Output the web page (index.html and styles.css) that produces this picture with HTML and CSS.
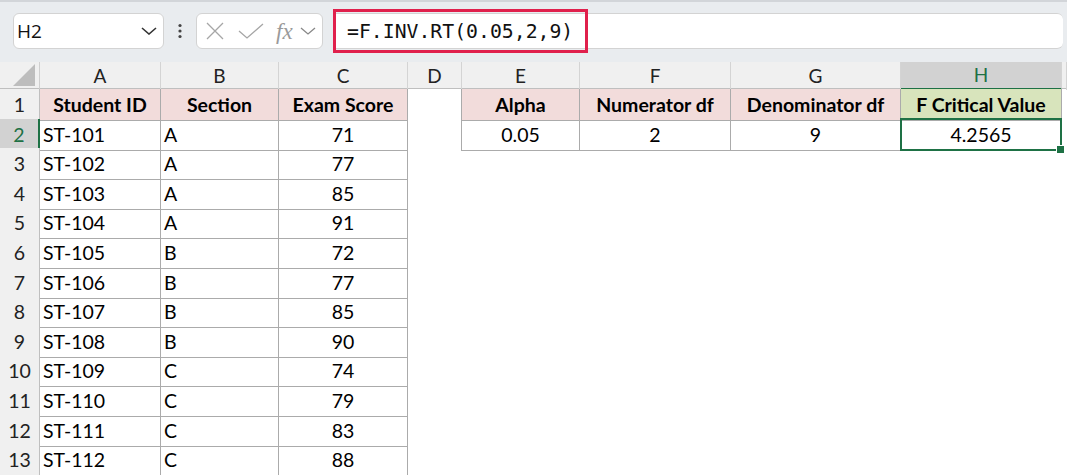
FILE: index.html
```html
<!DOCTYPE html>
<html lang="en">
<head>
    <meta charset="UTF-8">
    <meta name="viewport" content="width=device-width, initial-scale=1.0">
    <title>F.INV.RT - Sheet</title>
    <link rel="stylesheet" href="styles.css">
</head>
<body>
    <div class="toolbar">
        <div class="namebox">
            <span>H2</span>
            <svg class="chev" width="16" height="8" viewBox="0 0 16 8"><path d="M1 1 L8 7 L15 1" fill="none" stroke="#333" stroke-width="1.6"/></svg>
        </div>
        <svg class="dots" width="6" height="16" viewBox="0 0 6 16"><circle cx="3" cy="2.5" r="1.6" fill="#444"/><circle cx="3" cy="8" r="1.6" fill="#444"/><circle cx="3" cy="13.5" r="1.6" fill="#444"/></svg>
        <div class="fxbox">
            <svg width="20" height="18" viewBox="0 0 20 18"><path d="M2 1 L18 17 M18 1 L2 17" stroke="#a6a6a6" stroke-width="1.3" fill="none"/></svg>
            <svg width="26" height="16" viewBox="0 0 26 16"><path d="M1 8 L9 15 L25 1" stroke="#a6a6a6" stroke-width="1.3" fill="none"/></svg>
            <span class="fx">fx</span>
            <svg width="16" height="8" viewBox="0 0 16 8"><path d="M1 1 L8 7 L15 1" fill="none" stroke="#888" stroke-width="1.3"/></svg>
        </div>
        <div class="formula">
            <span class="ftext">=F.INV.RT(0.05,2,9)</span>
            <div class="mark"></div>
        </div>
    </div>

    <div class="sheet">
        <div class="row colhead">
            <div class="corner"><svg width="22" height="22" viewBox="0 0 22 22"><path d="M22 0 L22 22 L0 22 Z" fill="#bdbdbd"/></svg></div>
            <div class="ch">A</div><div class="ch">B</div><div class="ch">C</div><div class="ch">D</div>
            <div class="ch">E</div><div class="ch">F</div><div class="ch">G</div><div class="ch sel">H</div><div class="ch"></div>
        </div>
        <div class="row">
            <div class="rh">1</div>
            <div class="c hd">Student ID</div><div class="c hd">Section</div><div class="c hd">Exam Score</div>
            <div class="c edge"></div>
            <div class="c hd">Alpha</div><div class="c hd">Numerator df</div><div class="c hd">Denominator df</div><div class="c hd green">F Critical Value</div>
            <div class="c"></div>
        </div>
        <div class="row">
            <div class="rh active">2</div>
            <div class="c b">ST-101</div><div class="c b">A</div><div class="c b mid">71</div>
            <div class="c edge"></div>
            <div class="c b mid">0.05</div><div class="c b mid">2</div><div class="c b mid">9</div><div class="c b mid picked">4.2565</div>
            <div class="c"></div>
        </div>
        <div class="row"><div class="rh">3</div><div class="c b">ST-102</div><div class="c b">A</div><div class="c b mid">77</div></div>
        <div class="row"><div class="rh">4</div><div class="c b">ST-103</div><div class="c b">A</div><div class="c b mid">85</div></div>
        <div class="row"><div class="rh">5</div><div class="c b">ST-104</div><div class="c b">A</div><div class="c b mid">91</div></div>
        <div class="row"><div class="rh">6</div><div class="c b">ST-105</div><div class="c b">B</div><div class="c b mid">72</div></div>
        <div class="row"><div class="rh">7</div><div class="c b">ST-106</div><div class="c b">B</div><div class="c b mid">77</div></div>
        <div class="row"><div class="rh">8</div><div class="c b">ST-107</div><div class="c b">B</div><div class="c b mid">85</div></div>
        <div class="row"><div class="rh">9</div><div class="c b">ST-108</div><div class="c b">B</div><div class="c b mid">90</div></div>
        <div class="row"><div class="rh">10</div><div class="c b">ST-109</div><div class="c b">C</div><div class="c b mid">74</div></div>
        <div class="row"><div class="rh">11</div><div class="c b">ST-110</div><div class="c b">C</div><div class="c b mid">79</div></div>
        <div class="row"><div class="rh">12</div><div class="c b">ST-111</div><div class="c b">C</div><div class="c b mid">83</div></div>
        <div class="row"><div class="rh">13</div><div class="c b">ST-112</div><div class="c b">C</div><div class="c b mid">88</div></div>
    </div>
</body>
</html>
```

FILE: styles.css
```css
* {
    box-sizing: border-box;
}
body {
    margin: 0;
    width: 1067px;
    height: 475px;
    overflow: hidden;
    background-color: #fff;
    font-family: Lato, "Open Sans", sans-serif;
    color: #000;
}
.toolbar {
    height: 62px;
    background-color: #e9ecef;
    border-top: 2px solid #d2d5d9;
    display: flex;
    align-items: flex-start;
    padding-top: 11px;
    padding-left: 13px;
}
.namebox {
    width: 151px;
    height: 36px;
    background-color: #fff;
    border: 1px solid #d3d3d3;
    border-radius: 6px;
    display: flex;
    align-items: center;
    justify-content: space-between;
    padding: 0 6px 0 3px;
    font-family: "Open Sans", sans-serif;
    font-size: 19px;
    color: #111;
}
.dots {
    margin: 10px 13px 0 13px;
}
.fxbox {
    width: 127px;
    height: 36px;
    background-color: #fff;
    border: 1px solid #d3d3d3;
    border-radius: 6px;
    display: flex;
    align-items: center;
    padding: 0 4px 0 8px;
}
.fxbox svg:nth-child(2) {
    margin-left: 13px;
}
.fx {
    font-family: "Liberation Serif", serif;
    font-style: italic;
    font-size: 23px;
    color: #9a9a9a;
    margin-left: 12px;
    margin-right: 7px;
    line-height: 1;
}
.formula {
    position: relative;
    flex: 1;
    margin-left: 10px;
    margin-right: 4px;
    height: 36px;
    background-color: #fff;
    border-top: 1px solid #d3d3d3;
    border-bottom: 1px solid #d3d3d3;
    border-radius: 0 6px 6px 0;
    display: flex;
    align-items: center;
    padding-left: 14px;
}
.ftext {
    font-family: "DejaVu Sans Mono", monospace;
    font-size: 19.8px;
    color: #111;
}
.mark {
    position: absolute;
    left: 0;
    top: -5px;
    width: 255px;
    height: 44px;
    border: 3px solid #e0204c;
}
.row {
    display: grid;
    grid-template-columns: 40px 121px 118px 129px 54px 118px 151px 170px 161px 5px;
    height: 29.6px;
}
.colhead {
    height: 27px;
    background-color: #f0f0f0;
    border-bottom: 1px solid #bfbfbf;
}
.corner {
    border-right: 1px solid #cfcfcf;
    display: flex;
    align-items: flex-end;
    justify-content: flex-end;
    padding: 0 4px 4px 0;
}
.ch {
    border-right: 1px solid #d4d4d4;
    text-align: center;
    font-size: 19px;
    line-height: 28px;
    color: #222;
}
.ch.sel {
    background-color: #d2d2d2;
    color: #1e7145;
    border-bottom: 2px solid #1e7145;
    line-height: 26px;
}
.rh {
    background-color: #f0f0f0;
    border-right: 1px solid #bfbfbf;
    border-bottom: 1px solid #d4d4d4;
    text-align: center;
    font-size: 19.5px;
    line-height: 31px;
    color: #222;
}
.rh.active {
    background-color: #d2d2d2;
    color: #1e7145;
    border-right: 2px solid #1e7145;
}
.c {
    font-size: 19.5px;
    line-height: 31px;
    padding-left: 3px;
    white-space: nowrap;
}
.b {
    border-right: 1px solid #ababab;
    border-bottom: 1px solid #ababab;
}
.hd {
    background-color: #f2dcdb;
    border-right: 1px solid #ababab;
    border-bottom: 1px solid #ababab;
    font-weight: bold;
    text-align: center;
    padding-left: 0;
}
.hd.green {
    background-color: #d8e4bc;
}
.mid {
    text-align: center;
    padding-left: 0;
}
.edge {
    border-right: 1px solid #ababab;
}
.picked {
    position: relative;
}
.picked::after {
    content: "";
    position: absolute;
    left: -1px;
    top: -1px;
    right: -1px;
    bottom: -1px;
    border: 2px solid #1e7145;
}
.picked::before {
    content: "";
    position: absolute;
    right: -4px;
    bottom: -4px;
    width: 7px;
    height: 7px;
    background-color: #1e7145;
    border: 1px solid #fff;
    z-index: 1;
}
```
